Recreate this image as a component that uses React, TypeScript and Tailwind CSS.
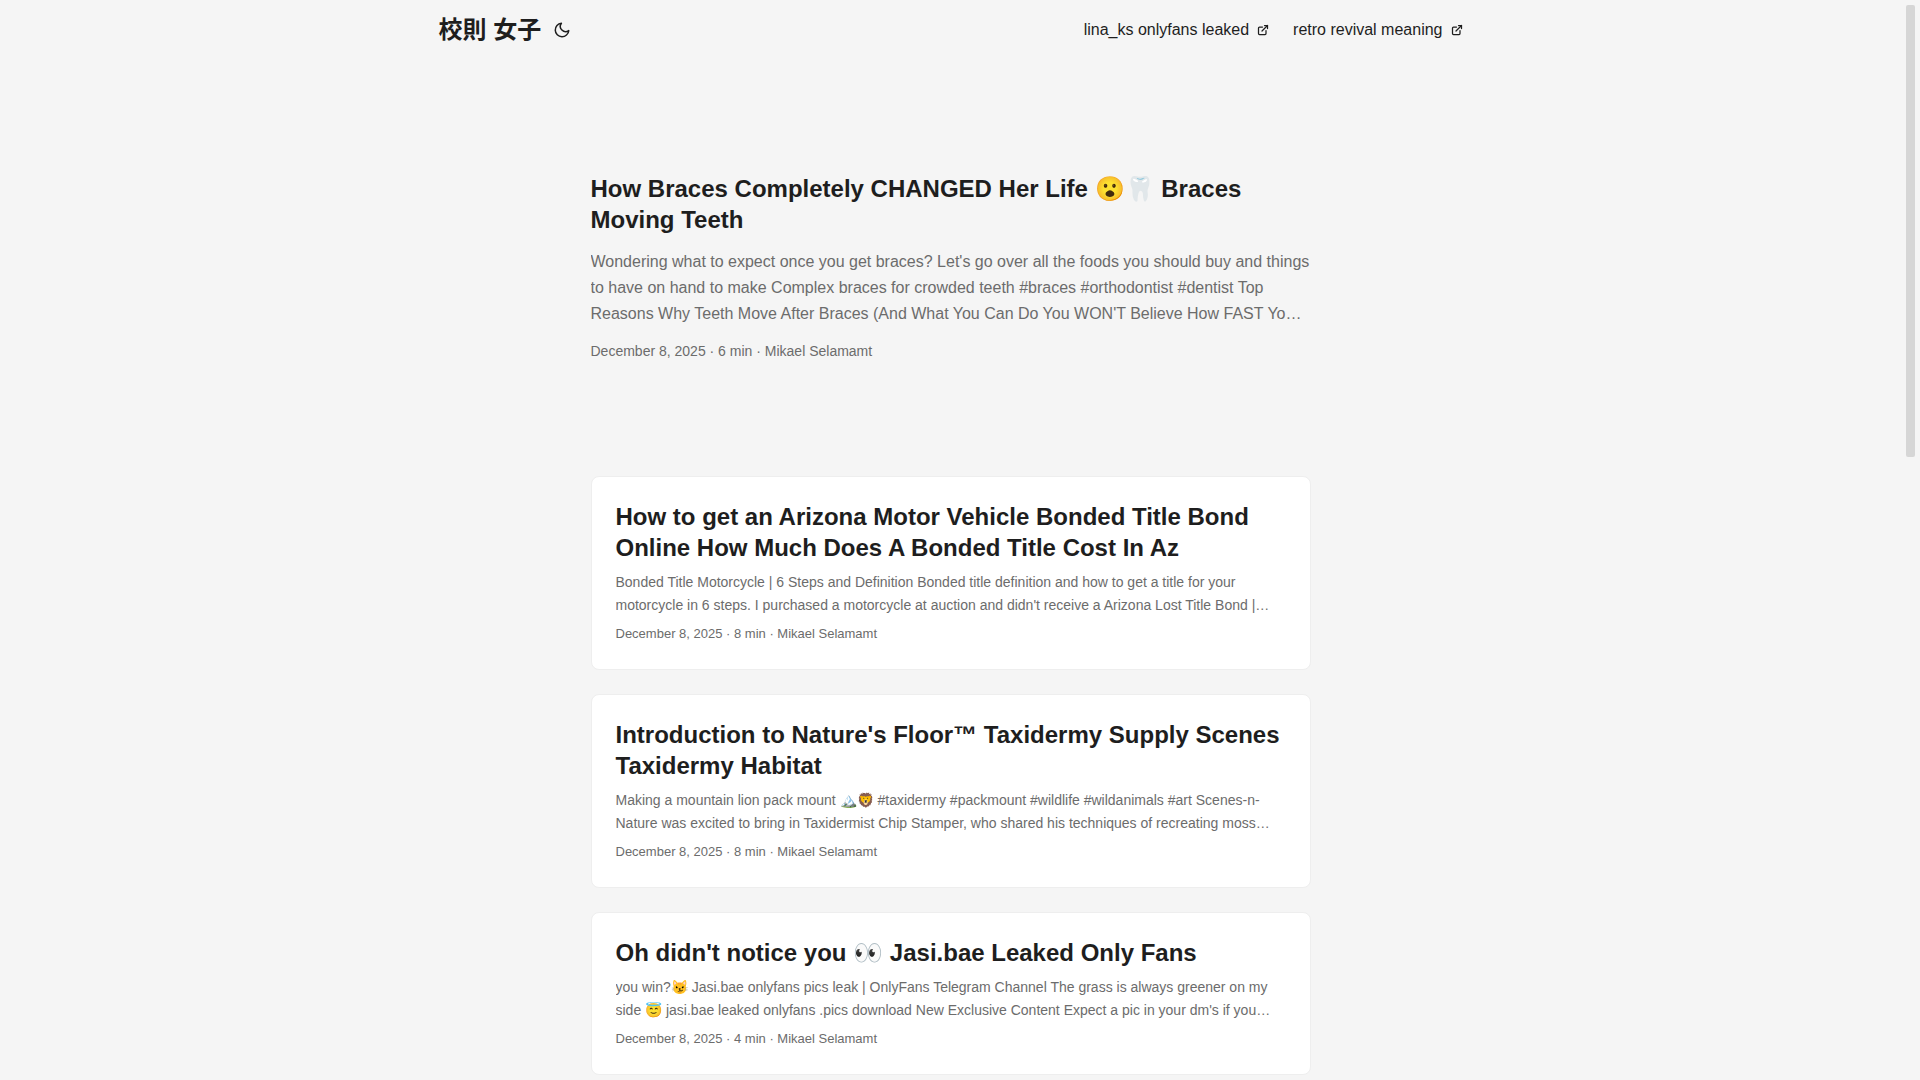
import React from 'react';

interface MenuLink {
  label: string;
  href: string;
}

interface Post {
  title: string;
  summary: string;
  minutes: number;
}

const menu: MenuLink[] = [
  { label: 'lina_ks onlyfans leaked', href: '#lina' },
  { label: 'retro revival meaning', href: '#retro' },
];

const featured: Post = {
  title: 'How Braces Completely CHANGED Her Life 😮🦷 Braces Moving Teeth',
  summary:
    "Wondering what to expect once you get braces? Let's go over all the foods you should buy and things to have on hand to make Complex braces for crowded teeth #braces #orthodontist #dentist Top Reasons Why Teeth Move After Braces (And What You Can Do You WON'T Believe How FAST Yo…",
  minutes: 6,
};

const posts: Post[] = [
  {
    title: 'How to get an Arizona Motor Vehicle Bonded Title Bond Online How Much Does A Bonded Title Cost In Az',
    summary:
      "Bonded Title Motorcycle | 6 Steps and Definition Bonded title definition and how to get a title for your motorcycle in 6 steps. I purchased a motorcycle at auction and didn't receive a Arizona Lost Title Bond |…",
    minutes: 8,
  },
  {
    title: "Introduction to Nature's Floor™ Taxidermy Supply Scenes Taxidermy Habitat",
    summary:
      'Making a mountain lion pack mount 🏔️🦁 #taxidermy #packmount #wildlife #wildanimals #art Scenes-n-Nature was excited to bring in Taxidermist Chip Stamper, who shared his techniques of recreating moss…',
    minutes: 8,
  },
  {
    title: "Oh didn't notice you 👀 Jasi.bae Leaked Only Fans",
    summary:
      "you win?😼 Jasi.bae onlyfans pics leak | OnlyFans Telegram Channel The grass is always greener on my side 😇 jasi.bae leaked onlyfans .pics download New Exclusive Content Expect a pic in your dm's if you…",
    minutes: 4,
  },
];

const MoonIcon = () => (
  <svg
    width="18"
    height="18"
    viewBox="0 0 24 24"
    fill="none"
    stroke="currentColor"
    strokeWidth="2"
    strokeLinecap="round"
    strokeLinejoin="round"
  >
    <path d="M21 12.79A9 9 0 1 1 11.21 3 7 7 0 0 0 21 12.79z" />
  </svg>
);

const ExternalIcon = () => (
  <svg
    width="12"
    height="12"
    viewBox="0 0 24 24"
    fill="none"
    stroke="currentColor"
    strokeWidth="2.5"
    strokeLinecap="round"
    strokeLinejoin="round"
    shapeRendering="geometricPrecision"
  >
    <path d="M18 13v6a2 2 0 01-2 2H5a2 2 0 01-2-2V8a2 2 0 012-2h6" />
    <path d="M15 3h6v6" />
    <path d="M10 14L21 3" />
  </svg>
);

const meta = (post: Post) => `December 8, 2025 · ${post.minutes} min · Mikael Selamamt`;

const PostCard: React.FC<{ post: Post }> = ({ post }) => (
  <article className="mb-6 rounded-lg border border-[#eeeeee] bg-white p-6">
    <h2 className="text-2xl leading-[31px] font-bold">
      <a href="#post">{post.title}</a>
    </h2>
    <p className="mt-2 mb-1.5 line-clamp-2 text-sm leading-[23px] text-[#6c6c6c]">{post.summary}</p>
    <footer className="text-[13px] leading-[22px] text-[#6c6c6c]">{meta(post)}</footer>
  </article>
);

const App: React.FC = () => {
  return (
    <div className="flex h-screen overflow-hidden bg-[#f5f5f5] font-['Liberation_Sans','Noto_Sans_CJK_JP',sans-serif] text-[#1e1e1e]">
      <div className="min-w-0 flex-1">
        {/* Header */}
        <nav className="mx-auto flex h-[60px] max-w-[1072px] items-center justify-between px-6">
          <div className="flex items-center gap-3">
            <a href="#home" className="text-2xl font-bold">
              校則 女子
            </a>
            <button type="button" aria-label="Toggle theme">
              <MoonIcon />
            </button>
          </div>
          <ul className="flex gap-6">
            {menu.map(item => (
              <li key={item.label}>
                <a href={item.href} className="flex items-center gap-2">
                  {item.label}
                  <ExternalIcon />
                </a>
              </li>
            ))}
          </ul>
        </nav>

        <main className="mx-auto max-w-[768px] p-6">
          {/* Featured post */}
          <article className="mt-6 mb-12 flex min-h-80 flex-col justify-center">
            <h1 className="text-2xl leading-[31px] font-bold">
              <a href="#post">{featured.title}</a>
            </h1>
            <p className="mt-[14px] mb-3 line-clamp-3 leading-[26px] text-[#6c6c6c]">{featured.summary}</p>
            <footer className="text-sm leading-6 text-[#6c6c6c]">{meta(featured)}</footer>
          </article>

          {posts.map(post => (
            <PostCard key={post.title} post={post} />
          ))}
        </main>
      </div>

      {/* Scrollbar */}
      <div className="w-[19px] shrink-0 p-[5px]">
        <div className="h-[452px] w-[9px] rounded-[2px] bg-[#d6d6d6]" />
      </div>
    </div>
  );
};

export default App;
